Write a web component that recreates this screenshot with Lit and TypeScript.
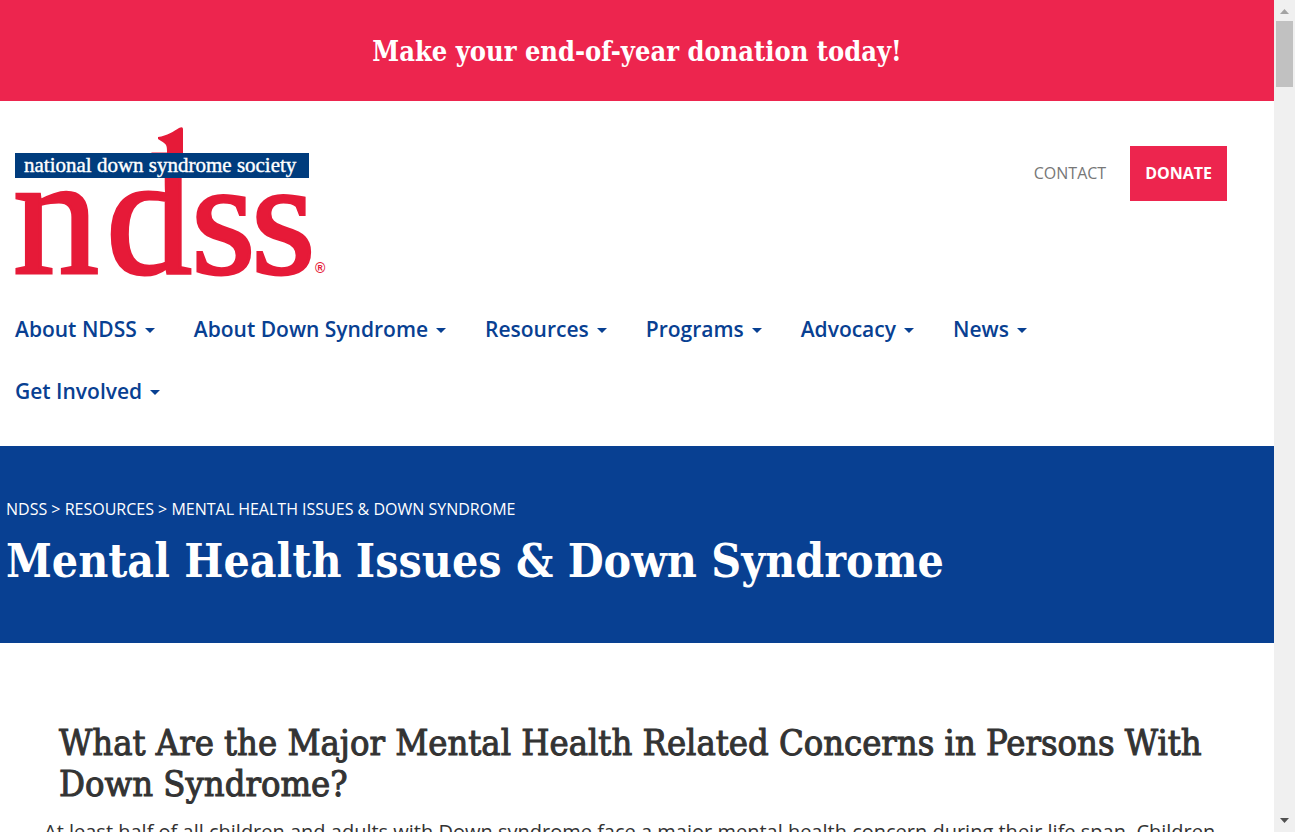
import { LitElement, html, css, svg } from "lit";
import { customElement } from "lit/decorators.js";

const NAV_ITEMS = [
  "About NDSS",
  "About Down Syndrome",
  "Resources",
  "Programs",
  "Advocacy",
  "News",
  "Get Involved",
];

@customElement("ndss-logo")
export class NdssLogo extends LitElement {
  static styles = css`
    :host {
      display: block;
    }
    .logo {
      display: block;
      width: 320px;
      height: 156px;
    }
    .letters {
      font-family: "Liberation Serif", serif;
      font-size: 166px;
      fill: #e61a38;
      stroke: #e61a38;
      stroke-width: 3px;
    }
    .large {
      font-size: 172px;
    }
    .strip-text {
      font-family: "Liberation Serif", serif;
      font-size: 21px;
      fill: #fff;
      stroke: #fff;
      stroke-width: 0.4px;
    }
    .mark {
      font-family: "Liberation Sans", sans-serif;
      font-size: 14px;
      font-weight: 700;
      fill: #e61a38;
    }
  `;

  render() {
    return html`<svg class="logo" viewBox="0 0 320 156" role="img" aria-label="National Down Syndrome Society">
      ${svg`
        <path d="M148 12 C157 11 164 6 169 3 Q173 1 173 4 V50 H157 V26 C157 19 156 19 148 14 Z" fill="#e61a38" />
        <text class="letters" y="148"><tspan class="large" x="3 96">nd</tspan><tspan x="181 241">ss</tspan></text>
        <rect x="5" y="28" width="294" height="25" fill="#003c7d" />
        <text class="strip-text" x="14" y="47">national down syndrome society</text>
        <text class="mark" x="305" y="148">®</text>
      `}
    </svg>`;
  }
}

@customElement("app-root")
export class AppRoot extends LitElement {
  static styles = css`
    :host {
      display: grid;
      grid-template-columns: minmax(0, 1fr) 21px;
      height: 100vh;
      overflow: hidden;
      background: #fff;
      color: #333;
      font-family: "Open Sans", sans-serif;
      font-size: 16px;
    }
    * {
      box-sizing: border-box;
    }
    a {
      color: inherit;
      text-decoration: none;
    }
    .page {
      overflow-y: auto;
      scrollbar-width: none;
    }
    .banner {
      display: block;
      padding: 32px 16px 29px;
      background: #ed254e;
      color: #fff;
      font: 700 27px/40px "DejaVu Serif Condensed", "DejaVu Serif", serif;
      text-align: center;
    }
    .top {
      display: flex;
      justify-content: space-between;
      align-items: flex-start;
      padding: 24px 47px 0 10px;
    }
    .actions {
      display: flex;
      align-items: center;
      gap: 24px;
      padding-top: 21px;
      line-height: 23px;
    }
    .contact {
      color: #777;
    }
    .donate {
      padding: 16px 15px;
      background: #ed254e;
      color: #fff;
      font-weight: 700;
    }
    .menu {
      display: flex;
      flex-wrap: wrap;
      column-gap: 39px;
      max-width: 1140px;
      margin: 0;
      padding: 17px 15px 24px;
      list-style: none;
    }
    .menu-button {
      display: flex;
      align-items: center;
      gap: 8px;
      padding: 16px 0;
      border: 0;
      background: none;
      color: #084092;
      font: 600 21px/30px "Open Sans", sans-serif;
    }
    .caret {
      margin-top: 2px;
      border: 5px solid transparent;
      border-top-color: currentColor;
      border-bottom: 0;
    }
    .hero {
      padding: 52px 6px 49px;
      background: #084092;
      color: #fff;
    }
    .crumbs {
      line-height: 23px;
    }
    .title {
      margin: 8px 0 1px;
      font: 700 46px/64px "DejaVu Serif Condensed", "DejaVu Serif", serif;
    }
    .article {
      padding: 79px 44px 40px;
    }
    .heading {
      margin: 0;
      padding: 0 15px;
      font: 400 36px/41px "DejaVu Serif Condensed", "DejaVu Serif", serif;
      -webkit-text-stroke: 1px currentColor;
    }
    .copy {
      margin: 13px 0 0;
      font-size: 20px;
      line-height: 30px;
    }
    .scrollbar {
      display: flex;
      flex-direction: column;
      align-items: center;
      background: #f0f0f0;
    }
    .arrow {
      flex: none;
      display: block;
      width: 21px;
      height: 21px;
    }
    .thumb {
      width: 17px;
      height: 66px;
      margin-bottom: auto;
      background: #c1c1c1;
    }
  `;

  render() {
    return html`
      <div class="page">
        <a class="banner" href="#donate">Make your end-of-year donation today!</a>
        <header>
          <div class="top">
            <a href="#home"><ndss-logo></ndss-logo></a>
            <div class="actions">
              <a class="contact" href="#contact">CONTACT</a>
              <a class="donate" href="#donate">DONATE</a>
            </div>
          </div>
          <nav>
            <ul class="menu">
              ${NAV_ITEMS.map(
                (item) => html`<li>
                  <button class="menu-button" type="button">${item}<span class="caret"></span></button>
                </li>`
              )}
            </ul>
          </nav>
        </header>
        <main>
          <div class="hero">
            <div class="crumbs">
              <a href="#home">NDSS</a> &gt; <a href="#resources">RESOURCES</a> &gt; MENTAL HEALTH ISSUES &amp; DOWN SYNDROME
            </div>
            <h1 class="title">Mental Health Issues &amp; Down Syndrome</h1>
          </div>
          <article class="article">
            <h2 class="heading">What Are the Major Mental Health Related Concerns in Persons With Down Syndrome?</h2>
            <p class="copy">At least half of all children and adults with Down syndrome face a major mental health concern during their life span. Children</p>
          </article>
        </main>
      </div>
      <div class="scrollbar" aria-hidden="true">
        <svg class="arrow" viewBox="0 0 21 21"><path d="M6 14h9l-4.500-5z" fill="#a3a3a3" /></svg>
        <div class="thumb"></div>
        <svg class="arrow" viewBox="0 0 21 21"><path d="M6 7h9l-4.500 5z" fill="#505050" /></svg>
      </div>
    `;
  }
}
